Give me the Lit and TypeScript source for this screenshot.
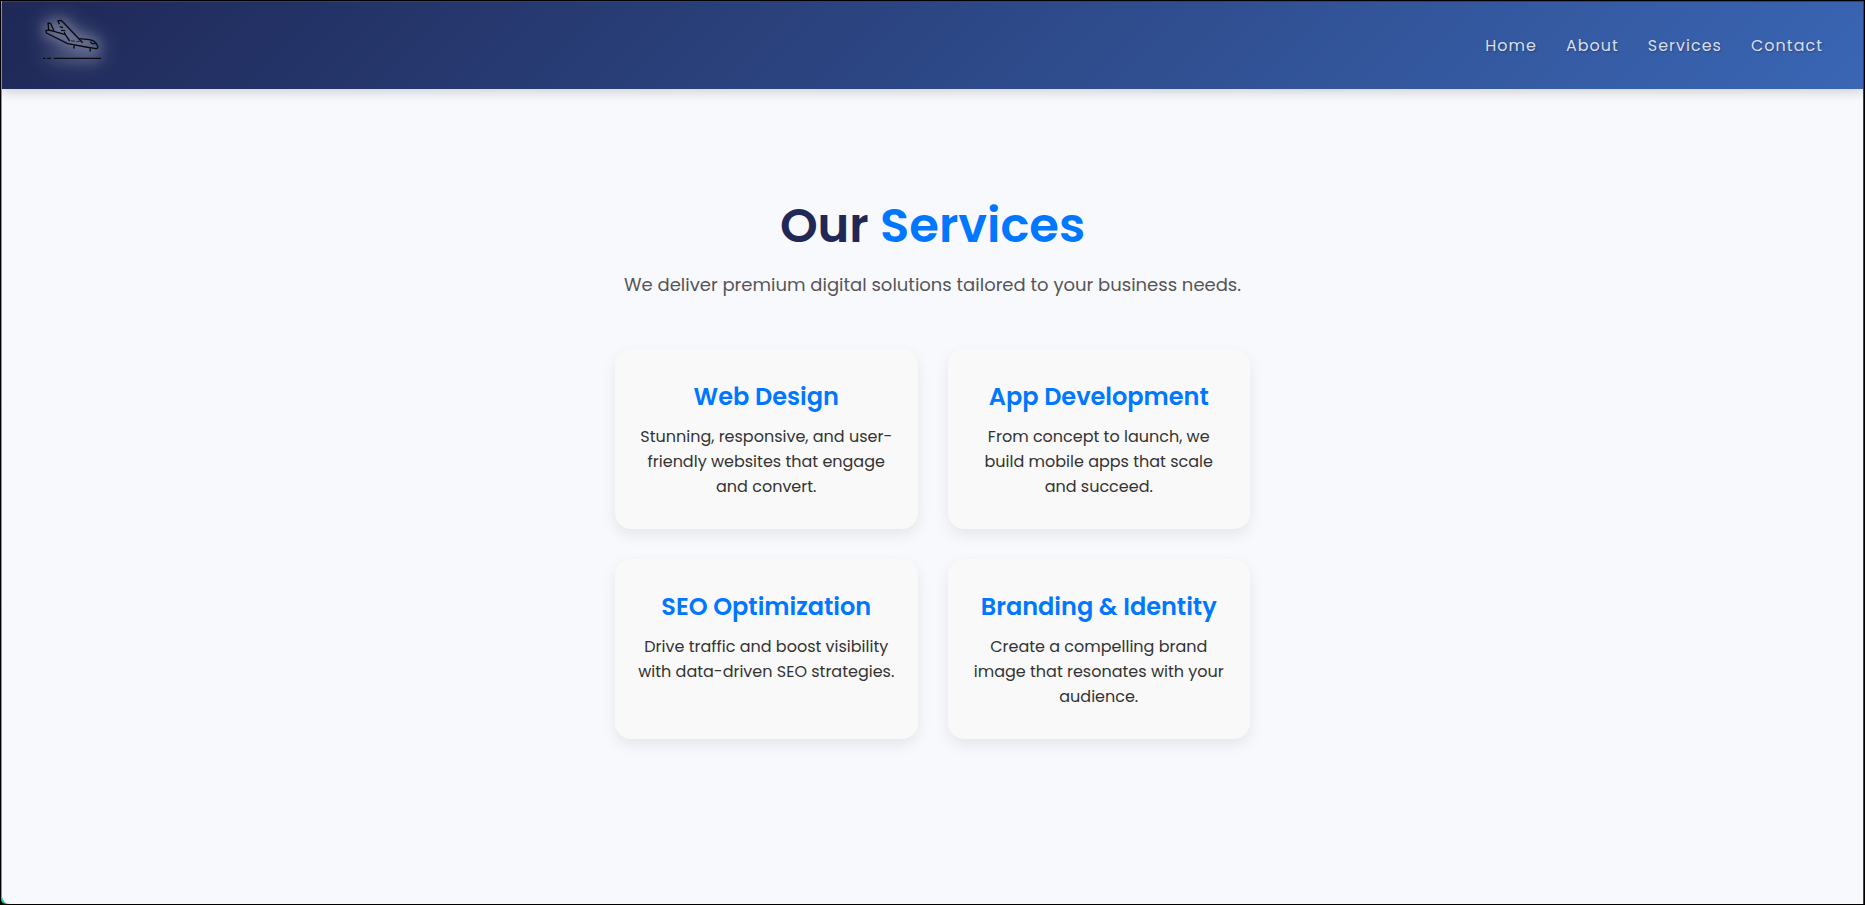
import { LitElement, html, css } from "lit";
import { customElement } from "lit/decorators.js";

interface Service {
  title: string;
  text: string;
}

const LINKS = ["Home", "About", "Services", "Contact"];

const SERVICES: Service[] = [
  { title: "Web Design", text: "Stunning, responsive, and user-friendly websites that engage and convert." },
  { title: "App Development", text: "From concept to launch, we build mobile apps that scale and succeed." },
  { title: "SEO Optimization", text: "Drive traffic and boost visibility with data-driven SEO strategies." },
  { title: "Branding & Identity", text: "Create a compelling brand image that resonates with your audience." },
];

@customElement("site-header")
class SiteHeader extends LitElement {
  static styles = css`
    :host {
      display: block;
    }
    .bar {
      display: flex;
      align-items: center;
      justify-content: space-between;
      padding: 8px 40px;
      background: linear-gradient(135deg, #1f2856, #3a66b4);
      box-shadow: 0 4px 10px rgba(0, 0, 0, 0.15);
    }
    .logo {
      display: block;
      padding-bottom: 11px;
    }
    .mark {
      display: block;
      width: 60px;
      height: 60px;
      overflow: visible;
      filter: drop-shadow(0 0 6px rgba(255, 255, 255, 0.6)) drop-shadow(0 0 10px rgba(255, 255, 255, 0.9));
    }
    .links {
      display: flex;
      gap: 29px;
      margin: 0;
      padding: 0;
      list-style: none;
    }
    .link {
      color: #d8deec;
      font-size: 16px;
      line-height: 26px;
      letter-spacing: 1px;
      text-decoration: none;
      text-shadow: 1px 1px 2px rgba(0, 0, 0, 0.3);
    }
  `;

  render() {
    return html`
      <header class="bar">
        <a class="logo" href="#" aria-label="Home page">
          <svg class="mark" viewBox="18 6 180 180" fill="none" stroke="#080a10" stroke-width="4" stroke-linejoin="round">
            <path d="M54 68 L44 47 L36 45 L38 66 L30 67 L31 75 L95 107 L150 117 L180 122 Q187 121 185 114 Q180 98 160 95 L130 92" />
            <path d="M38 66 L54 70 L88 80 M85 73 L88 80 L101 99 M70 49 L66 38 L75 37 L83 44 L140 104" />
            <path d="M71 56 L81 59 M75 67 L88 68 M163 101 L168 107 H179 M115 112 L113 122 M162 121 L163 131" />
            <path d="M105 98 L117 100 M121 101 L133 99" stroke-width="2" />
            <path d="M21 151 H28 M33 151 H45 M54 151 H195" />
          </svg>
        </a>
        <nav aria-label="Main">
          <ul class="links">
            ${LINKS.map((name) => html`<li><a class="link" href="#${name.toLowerCase()}">${name}</a></li>`)}
          </ul>
        </nav>
      </header>
    `;
  }
}

@customElement("service-card")
class ServiceCard extends LitElement {
  static properties = { heading: {}, text: {} };
  declare heading: string;
  declare text: string;

  static styles = css`
    :host {
      display: block;
      box-sizing: border-box;
      padding: 30px 20px;
      border-radius: 16px;
      background: #f9f9f9;
      box-shadow: 0 6px 15px rgba(0, 0, 0, 0.08);
    }
    .title {
      margin: 0 0 9px;
      color: #0077ff;
      font-size: 24px;
      font-weight: 600;
      line-height: 36px;
    }
    .text {
      margin: 0;
      color: #333;
      font-size: 16px;
      line-height: 25px;
    }
  `;

  render() {
    return html`
      <h2 class="title">${this.heading}</h2>
      <p class="text">${this.text}</p>
    `;
  }
}

@customElement("app-root")
class AppRoot extends LitElement {
  static styles = css`
    :host {
      display: flex;
      flex-direction: column;
      box-sizing: border-box;
      min-height: 100vh;
      border: 1px solid #000;
      background: #000;
      font-family: Poppins, Inter, sans-serif;
    }
    .edge {
      display: flex;
      flex: 1;
      flex-direction: column;
      padding-left: 1px;
      border-bottom-left-radius: 5px;
      background: linear-gradient(#35b8dc, #10d898);
    }
    .page {
      flex: 1;
      border: solid #444;
      border-width: 1px 1px 0 0;
      border-bottom-left-radius: 8px;
      background: #f8f9fd;
    }
    .services {
      box-sizing: border-box;
      width: 100%;
      max-width: 635px;
      margin: 0 auto;
      padding: 100px 0;
      text-align: center;
    }
    .title {
      margin: 0 0 8px;
      color: #1f2856;
      font-size: 48px;
      font-weight: 600;
      line-height: 74px;
    }
    .accent {
      color: #0077ff;
    }
    .lead {
      margin: 0 0 50px;
      color: #555;
      font-size: 18px;
      line-height: 28px;
    }
    .grid {
      display: grid;
      grid-template-columns: repeat(auto-fit, minmax(260px, 1fr));
      gap: 30px;
    }
  `;

  render() {
    return html`
      <div class="edge">
        <div class="page">
          <site-header></site-header>
          <main class="services">
            <h1 class="title">Our <span class="accent">Services</span></h1>
            <p class="lead">We deliver premium digital solutions tailored to your business needs.</p>
            <div class="grid">
              ${SERVICES.map((s) => html`<service-card .heading=${s.title} .text=${s.text}></service-card>`)}
            </div>
          </main>
        </div>
      </div>
    `;
  }
}
